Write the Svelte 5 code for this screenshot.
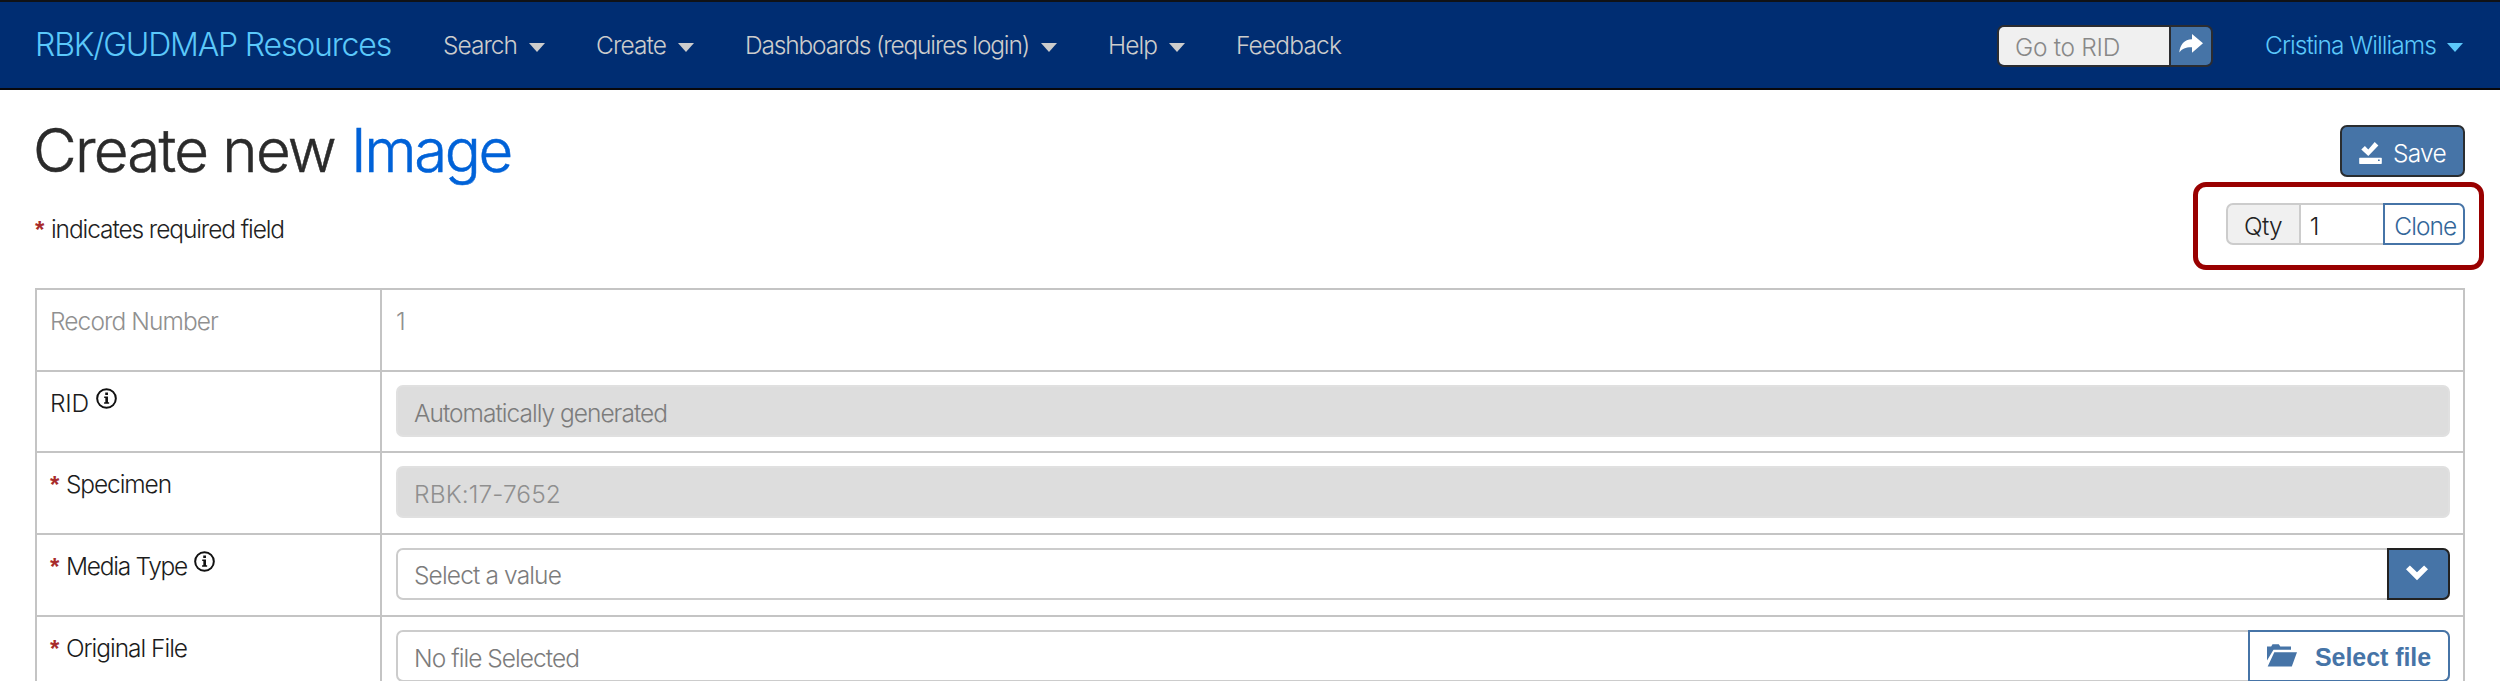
<script>
  const menus = [
    { label: 'Search', width: 74, caret: true },
    { label: 'Create', width: 70, caret: true },
    { label: 'Dashboards (requires login)', width: 284, caret: true },
    { label: 'Help', width: 49, caret: true },
    { label: 'Feedback', width: 105, caret: false }
  ];

  const rows = [
    { label: 'Record Number', width: 168, kind: 'number', value: '1' },
    { label: 'RID', width: 39, info: true, kind: 'disabled', value: 'Automatically generated', valueWidth: 253 },
    { label: 'Specimen', width: 105, required: true, kind: 'readonly', value: 'RBK:17-7652', valueWidth: 147 },
    { label: 'Media Type', width: 121, required: true, info: true, kind: 'select', value: 'Select a value', valueWidth: 147 },
    { label: 'Original File', width: 121, required: true, kind: 'file', value: 'No file Selected', valueWidth: 165 }
  ];

  // Spreads a label's letters evenly so that it fills the given width.
  function fit(node, width) {
    const natural = node.getBoundingClientRect().width;
    node.style.letterSpacing = (width - natural) / node.textContent.length + 'px';
  }
</script>

{#snippet info()}
  <svg class="info" viewBox="0 0 20 20" width="21" height="21">
    <circle cx="10" cy="10" r="8.9" fill="none" stroke="#111" stroke-width="1.9" />
    <path d="M8.8 4.3h2.6v2.3H8.8zM7.8 8.1h3.6v5.5h1.1v1.4H7.700v-1.400h1.200V9.500H7.800z" fill="#111" />
  </svg>
{/snippet}

<div class="page">
  <nav>
    <span class="brand"><span class="t" use:fit={356}>RBK/GUDMAP Resources</span></span>
    {#each menus as m}
      <span class="menu"><span class="t" use:fit={m.width}>{m.label}</span>{#if m.caret}<i class="caret"></i>{/if}</span>
    {/each}
    <div class="rid">
      <div class="rid-input"><span class="t" use:fit={105}>Go to RID</span></div>
      <div class="rid-go">
        <svg viewBox="0 0 24 19" width="24" height="19"><path d="M13 0 24 9.3 13 18.8V13.3C7 13.1 3.3 14.6.3 18.5 1 10.5 5.200 5.600 13 5.200z" fill="#fff" /></svg>
      </div>
    </div>
    <span class="user"><span class="t" use:fit={171}>Cristina Williams</span><i class="caret"></i></span>
  </nav>

  <header>
    <div class="heading">
      <h1><span class="t" use:fit={302}>Create new</span><span class="t entity" use:fit={160}>Image</span></h1>
      <p class="legend"><b class="star">*</b><span class="t" use:fit={233}>indicates required field</span></p>
    </div>
    <div class="actions">
      <div class="save">
        <svg viewBox="0 0 23 23" width="23" height="23">
          <path d="M2.300 8.600 5.900 5l3.400 3.400L15.700 1 19.400 4.600 9.300 15.100z" fill="#fff" />
          <path d="M.8 16.700h21.400a.6.6 0 0 1 .6.600v5a.6.6 0 0 1-.6.600H.8a.6.6 0 0 1-.6-.6v-5a.6.6 0 0 1 .6-.6zm18.200 1.800v1.600h1.700v-1.600z" fill="#fff" fill-rule="evenodd" />
        </svg>
        <span class="t" use:fit={53}>Save</span>
      </div>
      <div class="highlight">
        <div class="qty"><span class="t" use:fit={38}>Qty</span></div>
        <div class="count">1</div>
        <div class="clone"><span class="t" use:fit={62}>Clone</span></div>
      </div>
    </div>
  </header>

  <main>
    {#each rows as r}
      <div class="row">
        <div class="key" class:muted={r.kind === 'number'}>
          {#if r.required}<b class="star">*</b>{/if}<span class="t" use:fit={r.width}>{r.label}</span>{#if r.info}{@render info()}{/if}
        </div>
        <div class="value">
          {#if r.kind === 'number'}
            <span class="number">{r.value}</span>
          {:else}
            <div class="field {r.kind}">
              <span class="text"><span class="t" use:fit={r.valueWidth}>{r.value}</span></span>
              {#if r.kind === 'select'}
                <span class="open"><svg viewBox="0 0 22 16" width="22" height="16"><path d="M0 4.200 3.900.4 11 7.300 18.100.4 22 4.200 11 15.300z" fill="#fff" /></svg></span>
              {:else if r.kind === 'file'}
                <span class="pick">
                  <svg viewBox="0 0 30 23" width="30" height="23"><path d="M0 2.500h4.200L5.500.2h6.300l1.500 2.300H24v3.300H6.500L0 16.500zM7.300 8.300H30L24.800 22.500H.7z" fill="#4674a7" /></svg>
                  <span class="t" use:fit={116}>Select file</span>
                </span>
              {/if}
            </div>
          {/if}
        </div>
      </div>
    {/each}
  </main>
</div>

<style>
  :global(body) { margin: 0; background: #fff; }
  .page, .page * { box-sizing: border-box; }
  .page {
    width: 2500px; height: 681px; overflow: hidden;
    font: 340 24.5px/36px Inter, "Liberation Sans", sans-serif; color: #222;
  }
  .t { display: inline-block; white-space: nowrap; flex: none; }
  svg { display: block; flex: none; }

  nav {
    height: 90px; display: flex; align-items: flex-start;
    background: #002d72; border-top: 2px solid #101216; border-bottom: 2px solid #08080c;
    padding: 25px 37px 0 35px;
    color: #ccc;
  }
  .brand { width: 408px; font-size: 32px; color: #5bc8fa; }
  .menu { display: flex; margin-right: 51px; }
  .caret {
    width: 0; height: 0; margin: 16px 0 0 12px; flex: none;
    border: 8.5px solid transparent; border-top: 9px solid currentColor; border-bottom: 0;
  }
  .rid {
    display: flex; width: 216px; height: 42px; margin: -2px 0 0 auto;
    border: 2px solid #2b2c30; border-radius: 7px; overflow: hidden;
  }
  .rid-input { width: 170px; background: #f0f0f0; color: #888; padding: 2px 0 0 16px; }
  .rid-go { flex: 1; background: #4674a7; border-left: 2px solid #2b2c30; padding: 7px 0 0 8px; }
  .user { display: flex; margin-left: 52px; color: #5bc8fa; }
  .user .caret { margin-left: 11px; }

  header { display: flex; justify-content: space-between; height: 198px; padding: 0 16px 0 35px; }
  h1 {
    display: flex; margin: 24px 0 0 -2px; font-size: 60px; line-height: 72px; font-weight: 340; color: #2b2b2b;
    -webkit-text-stroke: .5px currentColor;
  }
  .entity { margin-left: 16px; color: #0062d8; }
  .legend { margin: 25px 0 0; display: flex; }
  .star { font-family: "Liberation Sans", sans-serif; font-weight: 700; font-size: 24px; color: #a82b2b; width: 16px; flex: none; position: relative; top: 1px; }
  .actions { display: flex; flex-direction: column; align-items: flex-end; padding-top: 35px; }
  .save {
    display: flex; gap: 11px; width: 125px; height: 52px; margin-right: 19px; padding: 7px 0 0 17px;
    background: #4674a7; border: 2px solid #2a2d30; border-radius: 7px; color: #fff;
  }
  .save svg { margin-top: 7px; }
  .save .t { margin-top: 1px; }
  .highlight {
    display: flex; width: 291px; height: 88px; margin-top: 5px; padding: 16px 14px 0 28px;
    border: 5px solid #900; border-radius: 13px;
  }
  .qty, .count, .clone { height: 42px; padding-top: 3px; border: 2px solid #ccc; }
  .qty { width: 75px; padding-left: 16px; background: #f0f0f0; border-radius: 7px 0 0 7px; }
  .count { width: 83px; border-width: 2px 0; padding-left: 9px; }
  .clone { width: 82px; padding-left: 9px; color: #336699; border-color: #4674a7; border-radius: 0 7px 7px 0; }

  main { width: 2430px; margin-left: 35px; border: 2px solid #c4c4c4; border-bottom: 0; }
  .row { display: flex; height: 81.7px; border-bottom: 2px solid #c4c4c4; }
  .key { display: flex; width: 343px; padding: 13px 0 0 13px; color: #1c1c1c; }
  .muted { color: #909090; }
  .info { margin: 3px 0 0 7px; }
  .value { flex: 1; border-left: 2px solid #c4c4c4; padding: 13px 13px 0 14px; }
  .number { display: block; color: #909090; }
  .field {
    display: flex; height: 52px; border: 2px solid #ccc; border-radius: 7px;
    color: #7c7c7c;
  }
  .text { flex: 1; padding: 8px 0 0 16px; }
  .disabled, .readonly { background: #ddd; border-color: #e0e0e0; }
  .readonly { color: #8f8f8f; }
  .select .text { padding-top: 7px; }
  .open { width: 63px; margin: -2px; padding: 15px 0 0 17px; background: #4674a7; border: 2px solid #222; border-radius: 0 7px 7px 0; }
  .pick {
    display: flex; gap: 18px; width: 202px; margin: -2px; padding: 7px 0 0 17px;
    border: 2px solid #4674a7; border-radius: 0 7px 7px 0;
    color: #4674a7; font-weight: 700; font-family: "Liberation Sans", sans-serif; font-size: 25px;
  }
  .pick svg { margin-top: 5px; }
</style>
